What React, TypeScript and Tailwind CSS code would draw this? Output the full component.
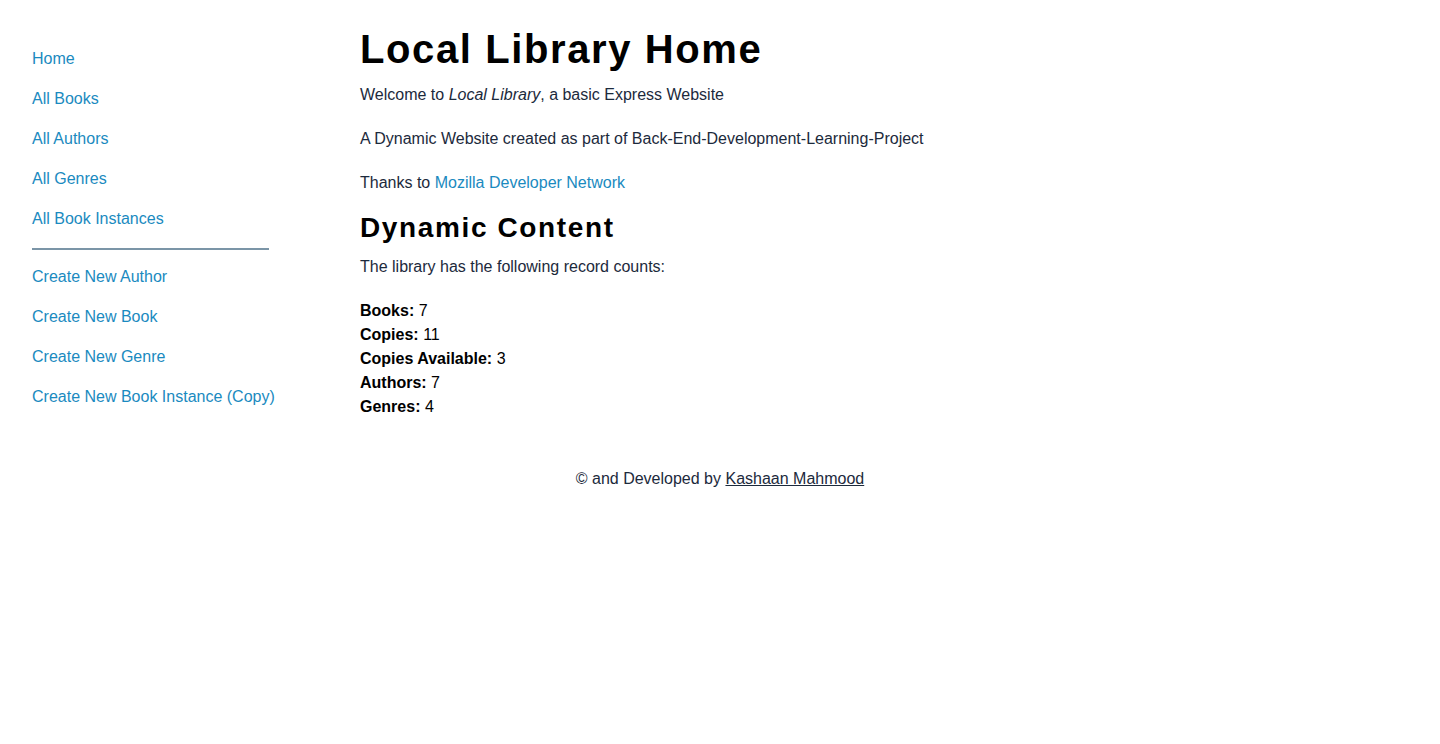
// Local Library home page
const NAV_MAIN = ['Home', 'All Books', 'All Authors', 'All Genres', 'All Book Instances']
const NAV_CREATE = ['Create New Author', 'Create New Book', 'Create New Genre', 'Create New Book Instance (Copy)']

const COUNTS = [
  { label: 'Books:', value: 7 },
  { label: 'Copies:', value: 11 },
  { label: 'Copies Available:', value: 3 },
  { label: 'Authors:', value: 7 },
  { label: 'Genres:', value: 4 },
]

export default function App() {
  return (
    <div className="min-h-[744px] bg-white text-[16px] text-[#1c2a3c]" style={{ fontFamily: '"Liberation Sans", Arial, sans-serif' }}>
      <div className="flex px-8">
        {/* Sidebar */}
        <aside className="w-[328px] shrink-0 pt-[39px]">
          <ul>
            {NAV_MAIN.map((item) => (
              <li key={item} className="h-10 flex items-center">
                <a href="#" className="text-[#1a8ac0] leading-6">{item}</a>
              </li>
            ))}
          </ul>
          <hr className="w-[237px] mt-[9px] mb-[7px] border-0 h-[2px] bg-[#7b95a7]" />
          <ul>
            {NAV_CREATE.map((item) => (
              <li key={item} className="h-10 flex items-center">
                <a href="#" className="text-[#1a8ac0] leading-6">{item}</a>
              </li>
            ))}
          </ul>
        </aside>

        {/* Main content */}
        <main className="pt-[25px]">
          <h1 className="text-[40px] leading-[48px] font-bold tracking-[0.04em] text-black">Local Library Home</h1>
          <p className="mt-[10px] leading-6">
            Welcome to <em>Local Library</em>, a basic Express Website
          </p>
          <p className="mt-5 leading-6">A Dynamic Website created as part of Back-End-Development-Learning-Project</p>
          <p className="mt-5 leading-6">
            Thanks to <a href="#" className="text-[#1a8ac0]">Mozilla Developer Network</a>
          </p>

          <h2 className="mt-[15px] text-[28px] leading-9 font-bold tracking-[0.058em] text-black">Dynamic Content</h2>
          <p className="mt-[9px] leading-6">The library has the following record counts:</p>

          <ul className="mt-5 text-black">
            {COUNTS.map((c) => (
              <li key={c.label} className="leading-6">
                <strong className="font-bold">{c.label}</strong> {c.value}
              </li>
            ))}
          </ul>
        </main>
      </div>

      <footer className="mt-12 text-center leading-6">
        © and Developed by <a href="#" className="underline">Kashaan Mahmood</a>
      </footer>
    </div>
  )
}
